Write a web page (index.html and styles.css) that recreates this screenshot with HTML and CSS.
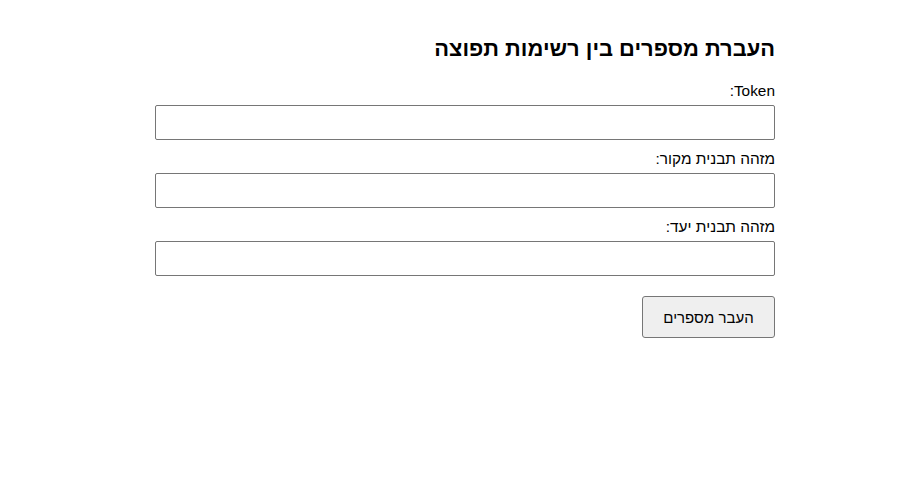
FILE: index.html
```html
<!DOCTYPE html>
<html lang="he" dir="rtl">
<head>
<meta charset="utf-8">
<title>העברת מספרים</title>
<link rel="stylesheet" href="styles.css">
</head>
<body>
<div class="page">
  <form class="form">
    <h2 class="title">העברת מספרים בין רשימות תפוצה</h2>
    <label class="label" for="token">Token:</label>
    <input class="field" id="token" type="text">
    <label class="label" for="src">מזהה תבנית מקור:</label>
    <input class="field" id="src" type="text">
    <label class="label" for="dst">מזהה תבנית יעד:</label>
    <input class="field" id="dst" type="text">
    <div class="actions">
      <button class="btn" type="button">העבר מספרים</button>
    </div>
  </form>
</div>
</body>
</html>
```

FILE: styles.css
```css
html, body {
  margin: 0;
  padding: 0;
  background: #ffffff;
}
body {
  font-family: "Liberation Sans", Arial, sans-serif;
  color: #000000;
}
.page {
  display: flex;
  justify-content: flex-start;
  padding-right: 134px;
}
.form {
  width: 620px;
  display: flex;
  flex-direction: column;
  padding-top: 35px;
}
.title {
  margin: 0 0 18px 0;
  font-size: 21.9px;
  line-height: 28px;
  font-weight: bold;
}
.label {
  display: block;
  font-size: 15.4px;
  line-height: 18px;
  padding-top: 1px;
  margin-bottom: 5px;
}
.field {
  box-sizing: border-box;
  width: 620px;
  height: 35px;
  margin: 0 0 9px 0;
  border: 1px solid #767676;
  border-radius: 2px;
  padding: 0 8px;
  font-family: inherit;
  font-size: 16px;
  background: #ffffff;
}
.actions {
  display: flex;
  margin-top: 11px;
}
.btn {
  box-sizing: border-box;
  width: 133px;
  height: 42px;
  border: 1px solid #767676;
  border-radius: 3px;
  background: #efefef;
  font-family: inherit;
  font-size: 15px;
  color: #000000;
  padding: 0;
}
```
